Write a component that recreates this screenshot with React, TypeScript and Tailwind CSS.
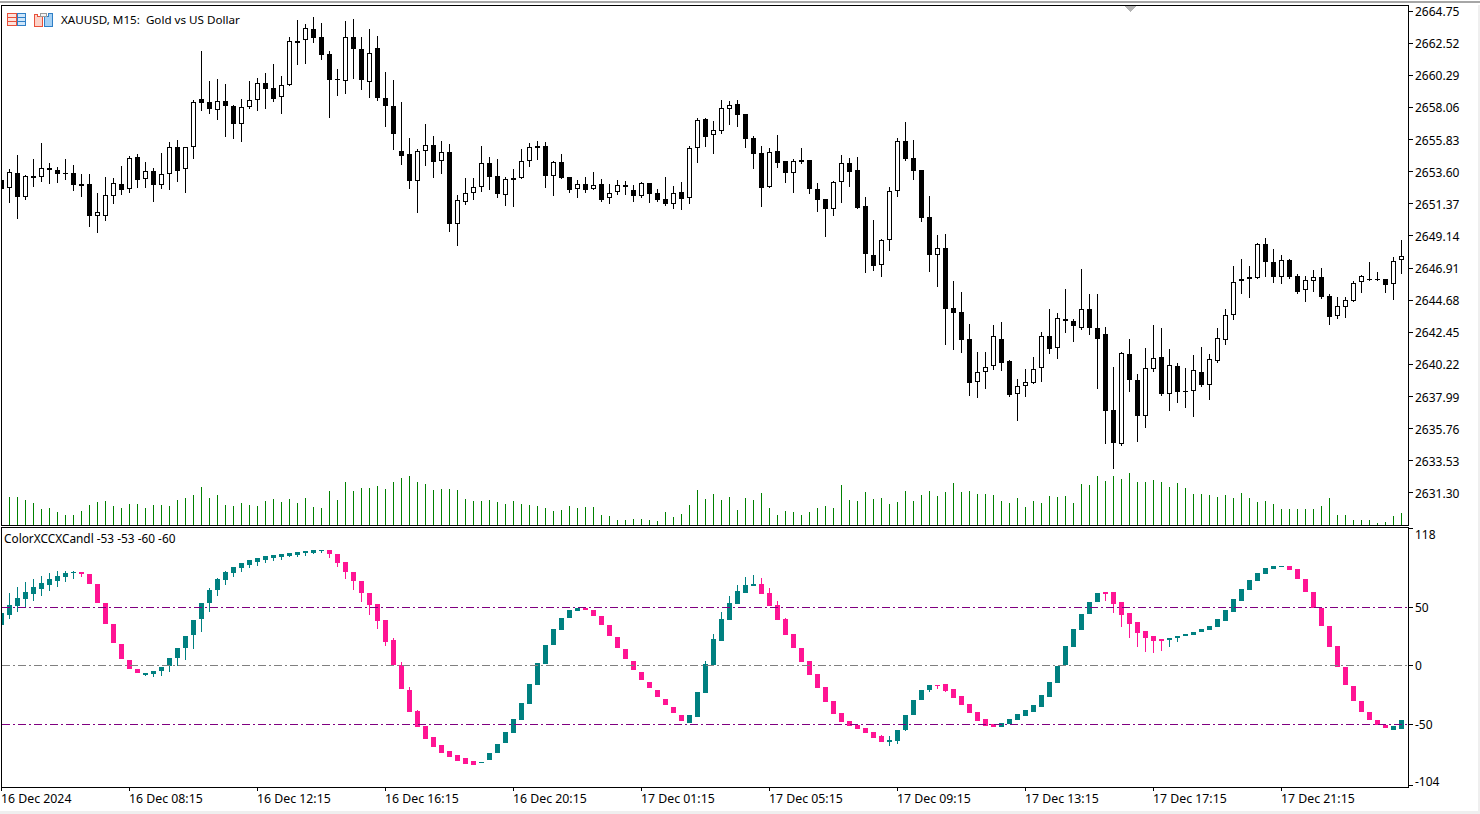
import React from 'react';

// hi, bodyTop, bodyBottom, lo, 1 = white candle (page y coordinates)
const CANDLES = [
    [180,180,189,189,0],[169,172,188,202,1],[155,173,197,218,0],[175,176,197,199,1],[159,176,178,186,0],
    [143,168,177,181,1],[163,168,170,183,0],[167,170,174,182,0],[159,173,174,179,0],[165,173,185,190,0],
    [174,184,186,196,0],[174,184,216,226,0],[193,212,216,232,1],[177,195,216,220,1],[178,183,196,203,1],
    [166,184,190,194,0],[156,158,189,192,1],[154,157,180,187,0],[162,171,179,187,1],[168,171,185,201,0],
    [153,174,185,188,1],[142,147,174,189,1],[140,147,171,181,0],[147,147,169,192,1],[100,102,147,158,1],
    [51,99,103,110,0],[81,102,109,113,0],[79,101,110,119,1],[84,101,106,136,0],[105,106,124,138,0],
    [99,107,124,141,1],[81,100,107,108,1],[78,83,100,110,1],[73,83,89,108,0],[64,88,99,101,0],
    [76,85,97,113,1],[37,41,85,85,1],[20,41,43,64,0],[24,28,40,63,1],[17,29,38,42,0],
    [23,37,55,59,0],[51,54,80,117,0],[69,79,80,95,0],[21,37,81,93,1],[19,37,49,78,0],
    [37,49,80,89,0],[29,53,82,97,1],[36,48,98,100,0],[72,98,106,126,0],[80,106,134,149,0],
    [102,151,156,164,0],[138,154,181,188,0],[149,151,181,212,1],[124,145,151,165,1],[136,145,162,177,0],
    [141,152,161,173,1],[144,152,224,231,0],[195,200,224,245,1],[178,193,202,204,1],[178,187,193,199,1],
    [146,163,187,191,1],[157,163,177,189,0],[159,176,194,197,0],[177,179,195,205,1],[169,178,180,206,1],
    [149,161,178,178,1],[143,147,161,166,1],[141,146,148,159,0],[142,146,176,187,0],[161,162,176,195,1],
    [154,162,178,178,0],[177,177,190,192,0],[180,184,189,197,1],[177,184,190,192,0],[172,185,189,189,1],
    [179,184,200,201,0],[184,193,198,203,1],[180,185,192,194,1],[181,185,187,194,0],[185,190,196,201,0],
    [182,183,196,197,1],[183,183,194,202,0],[189,193,200,201,0],[177,199,204,205,0],[186,193,204,208,1],
    [182,192,199,209,0],[146,148,198,203,1],[118,120,148,162,1],[118,119,137,146,0],[121,130,135,153,1],
    [100,108,131,133,1],[101,105,109,124,1],[100,104,115,126,0],[114,114,139,147,0],[136,138,154,168,0],
    [146,153,188,206,0],[148,152,187,187,1],[135,151,163,167,0],[161,161,173,182,0],[159,161,173,192,1],
    [148,160,162,163,0],[160,160,189,193,0],[183,189,200,211,0],[199,199,209,236,0],[181,182,209,215,1],
    [155,163,182,202,1],[158,163,172,186,0],[157,170,208,208,0],[197,206,254,272,0],[220,255,266,270,0],
    [239,240,265,276,1],[187,191,240,250,1],[138,141,191,196,1],[122,141,159,160,0],[140,158,171,179,0],
    [170,170,218,221,0],[196,217,255,271,0],[235,248,255,286,1],[234,248,309,344,0],[281,308,313,349,0],
    [292,312,340,352,0],[324,339,383,395,0],[352,372,382,397,1],[352,367,372,388,1],[325,336,366,369,1],
    [322,339,363,370,0],[360,361,395,396,0],[379,386,394,420,1],[369,382,386,396,1],[357,369,383,383,1],
    [332,336,368,381,1],[309,336,349,353,0],[313,318,348,358,1],[289,319,321,332,0],[319,321,326,341,0],
    [269,309,328,329,1],[294,309,328,334,0],[294,328,339,388,0],[327,334,411,443,0],[367,410,443,468,0],
    [352,353,444,445,1],[339,354,380,391,0],[374,380,416,441,0],[348,368,416,427,1],[325,358,369,371,1],
    [328,357,394,395,0],[349,365,394,410,1],[363,366,392,402,0],[368,391,392,407,0],[355,370,391,416,1],
    [347,372,385,386,0],[354,359,385,399,1],[328,338,361,362,1],[309,315,340,344,1],[266,282,315,319,1],
    [259,279,281,293,0],[266,277,279,297,1],[243,244,278,278,1],[238,244,262,276,0],[249,262,277,282,0],
    [255,260,277,283,1],[259,260,277,278,0],[274,276,292,293,0],[276,280,290,301,1],[270,277,281,291,1],
    [268,277,297,298,0],[294,296,317,324,0],[297,306,316,318,1],[297,300,307,317,1],[281,283,301,301,1],
    [275,276,282,292,1],[262,279,280,280,0],[272,279,280,280,0],[279,279,285,292,0],[257,261,284,299,1],
    [240,256,260,273,1],
];

// volume bar tops, read at 3x from y=470
const VOLUMES = [
    100,82,82,90,100,118,114,126,136,136,124,106,97,94,108,114,102,102,114,106,106,108,90,84,76,
    52,84,76,106,108,100,106,108,94,88,96,88,99,84,112,114,64,90,36,64,55,55,49,57,36,
    25,18,36,42,60,57,57,60,87,93,93,90,97,102,94,102,106,108,114,124,121,108,114,112,112,
    136,138,150,150,147,148,150,153,127,141,132,106,60,87,73,90,82,121,84,90,70,114,135,124,127,
    136,127,114,108,114,45,90,94,67,87,84,102,97,64,94,76,64,78,67,40,67,64,72,72,75,
    94,99,84,112,94,99,79,82,78,99,42,45,18,33,18,27,10,36,36,30,36,51,39,54,72,
    72,75,81,75,84,69,84,96,94,102,118,118,118,118,118,108,84,136,136,150,150,150,160,156,138,
    129,
];

// hi, top, bottom, lo, 1 = pink, read at 3x from y=470
const OSC = [
    [430,430,464,464,0],[370,406,434,446,0],[352,385,407,425,0],[337,367,386,412,0],[328,352,371,392,0],
    [319,340,356,377,0],[310,328,344,362,0],[304,319,332,350,0],[304,310,320,335,0],[304,307,310,326,0],
    [307,307,311,320,1],[313,313,341,341,1],[343,343,398,398,1],[400,400,461,461,1],[463,463,518,518,1],
    [523,523,566,566,1],[571,571,596,596,1],[598,598,608,608,1],[610,610,614,617,0],[604,604,611,620,0],
    [592,592,602,617,0],[565,565,589,605,0],[535,535,564,587,0],[499,499,533,569,0],[451,451,494,536,0],
    [400,400,446,485,0],[355,361,398,425,0],[325,328,359,377,0],[304,307,329,344,0],[292,292,308,320,0],
    [280,280,293,305,0],[271,271,284,295,0],[265,265,275,287,0],[259,259,271,279,0],[256,256,264,272,0],
    [253,253,261,269,0],[250,250,257,262,0],[247,247,254,260,0],[244,244,250,257,0],[241,241,248,253,0],
    [240,240,243,248,0],[240,240,251,263,1],[253,253,279,290,1],[277,277,305,326,1],[307,307,332,359,1],
    [334,334,368,395,1],[370,370,404,434,1],[403,403,452,476,1],[451,451,515,527,1],[503,511,586,586,1],
    [577,586,658,658,1],[651,659,725,725,1],[720,724,772,772,1],[769,769,806,806,1],[802,802,832,832,1],
    [826,826,848,848,1],[844,844,862,862,1],[856,856,872,872,1],[865,865,881,881,1],[874,874,884,884,1],
    [875,875,878,878,0],[850,850,869,869,0],[823,823,848,848,0],[787,787,818,818,0],[748,748,788,788,0],
    [700,700,749,749,0],[643,643,701,701,0],[580,580,644,644,0],[526,526,581,581,0],[478,478,524,524,0],
    [445,445,479,479,0],[421,421,443,443,0],[415,415,422,422,0],[415,415,419,419,1],[421,421,437,437,1],
    [438,438,465,465,1],[466,466,497,497,1],[502,502,533,533,1],[538,538,566,566,1],[574,574,599,599,1],
    [607,607,629,629,1],[637,637,653,653,1],[661,661,680,680,1],[688,688,704,704,1],[712,712,728,728,1],
    [736,736,752,752,1],[736,736,759,759,0],[667,667,740,740,0],[574,583,670,670,0],[493,508,586,586,0],
    [427,448,512,512,0],[379,400,449,449,0],[346,364,401,401,0],[322,346,368,368,0],[316,343,347,347,0],
    [325,343,371,371,1],[355,370,407,407,1],[394,406,449,449,1],[445,448,494,494,1],[493,493,535,535,1],
    [535,535,575,575,1],[574,574,614,614,1],[613,613,653,653,1],[652,652,695,695,1],[694,694,731,731,1],
    [730,730,755,755,1],[754,754,767,767,1],[766,766,776,776,1],[775,775,788,788,1],[787,787,803,803,1],
    [796,799,815,815,1],[797,811,815,827,0],[781,781,812,821,0],[736,736,780,782,0],[691,691,734,734,0],
    [661,661,689,689,0],[646,646,661,665,0],[644,644,647,656,1],[643,643,663,665,1],[658,658,683,683,1],
    [679,679,704,704,1],[703,703,728,728,1],[727,727,752,752,1],[748,748,767,767,1],[763,763,770,770,1],
    [760,760,770,770,0],[748,748,763,763,0],[733,733,749,749,0],[721,721,737,737,0],[706,706,725,725,0],
    [676,676,710,710,0],[637,637,680,680,0],[587,587,638,638,0],[529,529,586,586,0],[478,478,530,530,0],
    [433,433,479,479,0],[397,397,431,431,0],[370,370,395,395,0],[367,367,371,392,1],[367,367,401,428,1],
    [397,397,434,470,1],[430,430,461,503,1],[457,457,488,530,1],[483,483,503,546,1],[499,499,512,548,1],
    [508,508,512,542,1],[505,505,509,530,0],[499,499,503,515,0],[493,493,497,499,0],[487,487,494,494,0],
    [478,478,485,485,0],[469,469,479,479,0],[448,448,470,470,0],[421,421,452,452,0],[388,388,425,425,0],
    [358,358,392,392,0],[331,331,359,359,0],[310,310,332,332,0],[295,295,311,311,0],[289,289,296,296,0],
    [289,289,291,291,0],[289,289,299,299,1],[298,298,326,326,1],[328,328,365,365,1],[367,367,413,413,1],
    [413,413,467,467,1],[469,469,530,530,1],[529,529,590,590,1],[592,592,646,646,1],[648,648,692,692,1],
    [694,694,725,725,1],[727,727,749,749,1],[751,751,764,764,1],[765,765,773,773,1],[769,769,779,779,0],
    [751,751,776,776,0],
];

const PRICES = ['2664.75','2662.52','2660.29','2658.06','2655.83','2653.60','2651.37','2649.14','2646.91','2644.68','2642.45','2640.22','2637.99','2635.76','2633.53','2631.30'];
const TIMES = ['16 Dec 2024','16 Dec 08:15','16 Dec 12:15','16 Dec 16:15','16 Dec 20:15','17 Dec 01:15','17 Dec 05:15','17 Dec 09:15','17 Dec 13:15','17 Dec 17:15','17 Dec 21:15'];

const toY = (z: number) => Math.round(470 + z / 3);
const LEVELS = [
    { y: 607, color: '#800080' },
    { y: 665, color: '#808080' },
    { y: 724, color: '#800080' },
];

const MainChart = () => (
    <svg width={1406} height={519} viewBox="2 6 1406 519" shapeRendering="crispEdges" className="block">
        {VOLUMES.map((z, i) => (
            <rect key={i} x={1 + 8 * i} y={toY(z)} width={1} height={525 - toY(z)} fill="#008000" />
        ))}
        {CANDLES.map(([hi, top, bot, lo, bull], i) => {
            const cx = 1 + 8 * i;
            return (
                <g key={i}>
                    <rect x={cx} y={hi} width={1} height={lo - hi + 1} fill="#000" />
                    <rect x={cx - 2} y={top} width={5} height={Math.max(bot - top, 1)} fill="#000" />
                    {bull === 1 && bot - top > 2 && (
                        <rect x={cx - 1} y={top + 1} width={3} height={bot - top - 2} fill="#fff" />
                    )}
                </g>
            );
        })}
        <polygon points="1124,6 1136,6 1130,12" fill="#b4b4b4" />
    </svg>
);

const OscChart = () => (
    <svg width={1406} height={259} viewBox="2 528 1406 259" shapeRendering="crispEdges" className="block">
        {OSC.map(([hi, top, bot, lo, pink], i) => {
            const cx = 1 + 8 * i;
            const color = pink === 1 ? '#ff1493' : '#008080';
            return (
                <g key={i}>
                    <rect x={cx} y={toY(hi)} width={1} height={Math.max(toY(lo) - toY(hi), 1)} fill={color} />
                    <rect x={cx - 2} y={toY(top)} width={5} height={Math.max(toY(bot) - toY(top), 1)} fill={color} />
                </g>
            );
        })}
        {LEVELS.map((l) => (
            <line key={l.y} x1={2} x2={1408} y1={l.y + 0.5} y2={l.y + 0.5} stroke={l.color} strokeWidth={1} strokeDasharray="8 3 2 3" />
        ))}
    </svg>
);

const TableIcon = () => (
    <svg width={20} height={14} viewBox="0 0 20 14" shapeRendering="crispEdges">
        <rect x={0.5} y={0.5} width={9} height={12} fill="#fde3dd" stroke="#e8503a" />
        <rect x={10.5} y={0.5} width={8} height={12} fill="#cfe6fa" stroke="#2f7fc6" />
        <path d="M1 4.5h8M1 8.5h8" stroke="#e8503a" />
        <path d="M11 4.5h7M11 8.5h7" stroke="#2f7fc6" />
    </svg>
);

const ChartsIcon = () => (
    <svg width={20} height={16} viewBox="0 0 20 16" shapeRendering="crispEdges">
        <path d="M0.5 2.5h3v2h5v10h-8z" fill="#fcd2c8" stroke="#e8503a" />
        <path d="M12.5 4.5h2v-3h4v13h-8v-10z" fill="#a4d0f4" stroke="#2f7fc6" />
        <rect x={6.5} y={1.5} width={6} height={3} fill="#f4f4f4" stroke="#9a9a9a" />
    </svg>
);

const App = () => (
    <div className="w-[1480px] h-[814px] bg-white overflow-hidden flex flex-col text-black text-[12px] leading-[14px] font-['Noto_Sans','Liberation_Sans',sans-serif]">
        <div className="mt-px h-[2px] bg-[#a6a6a6]" />
        <div className="h-[2px]" />
        <div className="flex flex-1 min-h-0">
            <div className="flex flex-col ml-px w-[1408px]">
                <div className="relative border border-black h-[521px]">
                    <MainChart />
                    <div className="absolute left-[5px] top-[6px] flex items-center gap-[7px]">
                        <TableIcon />
                        <ChartsIcon />
                        <span className="text-[11.65px] whitespace-pre">XAUUSD, M15:  Gold vs US Dollar</span>
                    </div>
                </div>
                <div className="relative mt-px border-x border-y border-black h-[261px]">
                    <OscChart />
                    <span className="absolute left-[2px] top-[3px] text-[11.85px]">ColorXCCXCandl -53 -53 -60 -60</span>
                </div>
                <div className="flex">
                    {TIMES.map((t) => (
                        <div key={t} className="w-[128px] shrink-0 flex flex-col">
                            <div className="w-px h-[3px] bg-black" />
                            <span className="mt-[1px] text-[12.3px] whitespace-pre">{t}</span>
                        </div>
                    ))}
                </div>
            </div>
            <div className="flex flex-col w-[69px]">
                <div className="h-[522px] -mt-px flex flex-col gap-[18.13px]">
                    {PRICES.map((p) => (
                        <div key={p} className="h-[14px] flex items-center">
                            <div className="w-[4px] h-px bg-black" />
                            <span className="ml-[2px] mt-[2px]">{p}</span>
                        </div>
                    ))}
                </div>
                <div className="flex flex-col mt-[2px]">
                    <div className="h-[14px] flex">
                        <div className="w-[4px] h-px bg-black" />
                        <span className="ml-[2px]">118</span>
                    </div>
                    <div className="mt-[58px] h-[14px] flex items-center">
                        <div className="w-[4px] h-px bg-black" />
                        <span className="ml-[2px] mt-[2px]">50</span>
                    </div>
                    <div className="mt-[44px] h-[14px] flex items-center">
                        <div className="w-[4px] h-px bg-black" />
                        <span className="ml-[2px] mt-[2px]">0</span>
                    </div>
                    <div className="mt-[45px] h-[14px] flex items-center">
                        <div className="w-[4px] h-px bg-black" />
                        <span className="ml-[2px] mt-[2px]">-50</span>
                    </div>
                    <div className="mt-[43px] h-[15px] flex items-end">
                        <div className="w-[4px] h-px bg-black mb-[3px]" />
                        <span className="ml-[2px]">-104</span>
                    </div>
                </div>
            </div>
            <div className="w-[2px] bg-[#efefef]" />
        </div>
        <div className="h-[3px] bg-[#efefef]" />
    </div>
);

export default App;
